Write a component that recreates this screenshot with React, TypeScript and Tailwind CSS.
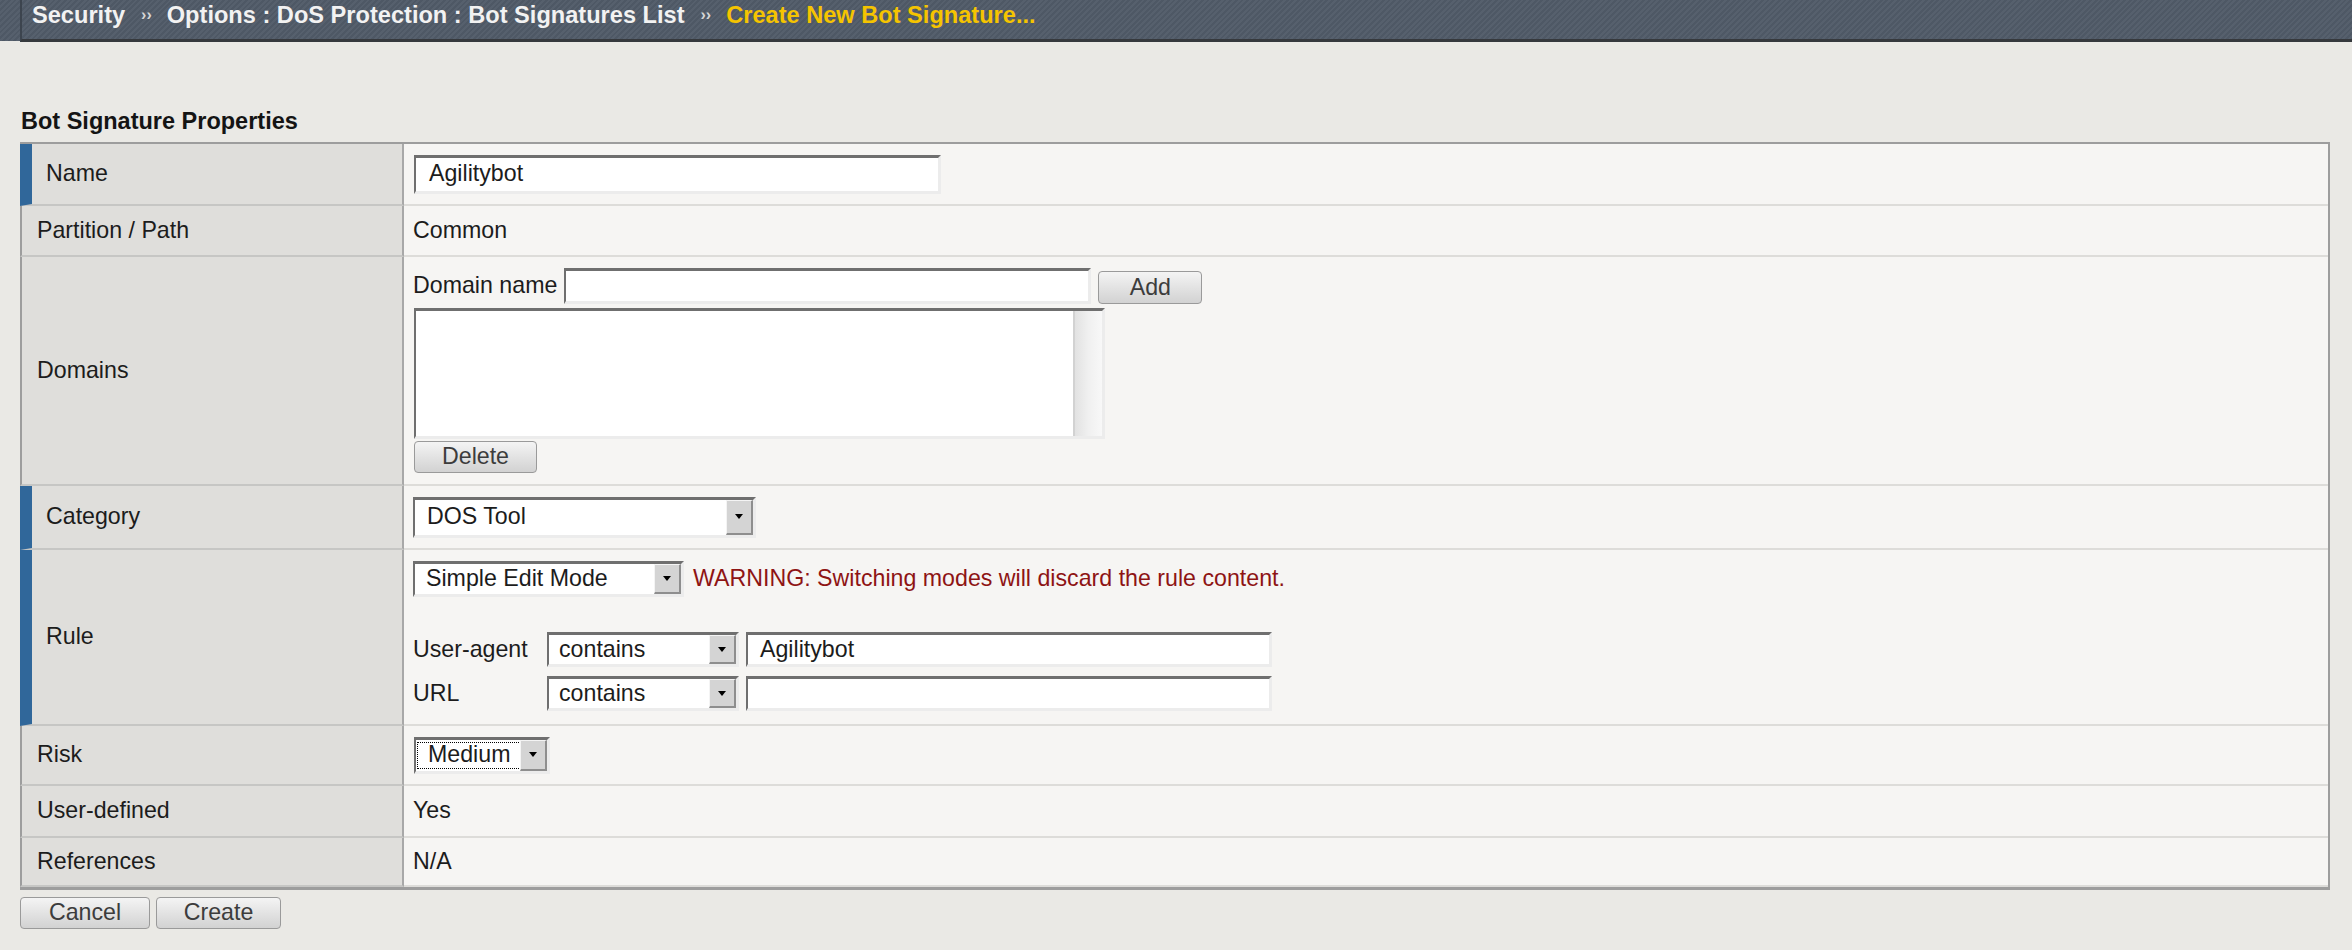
import React from 'react';

const stripe =
    'bg-[repeating-linear-gradient(135deg,#56606d_0px,#56606d_2px,#4e5865_2px,#4e5865_4px)]';

const Sep: React.FC = () => (
    <span className="ml-[16px] mr-[15px] text-[16px] text-[#d6d6d6]">››</span>
);

const TextInput: React.FC<{ value?: string; className: string }> = ({ value, className }) => (
    <div
        className={`flex items-center bg-white border-t-[3px] border-l-2 border-b-[3px] border-r-[3px] border-t-[#6f6f6f] border-l-[#6f6f6f] border-b-[#ececec] border-r-[#ececec] ${className}`}
    >
        {value}
    </div>
);

const Arrow: React.FC = () => (
    <div className="w-[27px] self-stretch shrink-0 flex items-center justify-center bg-[#d4d4d4] border-t border-l border-t-[#f4f4f4] border-l-[#f4f4f4] border-b-2 border-r-2 border-b-[#8e8e8e] border-r-[#8e8e8e]">
        <div className="w-0 h-0 border-l-[4px] border-r-[4px] border-t-[5px] border-l-transparent border-r-transparent border-t-black" />
    </div>
);

const Select: React.FC<{ value: string; className: string; focused?: boolean }> = ({
    value,
    className,
    focused,
}) => (
    <div
        className={`flex items-stretch bg-white border-t-[3px] border-l-2 border-b-[3px] border-r-[3px] border-t-[#6f6f6f] border-l-[#6f6f6f] border-b-[#ececec] border-r-[#ececec] ${className}`}
    >
        <div className="flex-1 flex items-center min-w-0">
            {focused ? (
                <span className="ml-[1px] my-[2px] self-stretch flex items-center px-[10px] border border-dotted border-black">
                    {value}
                </span>
            ) : (
                <span className="pl-[10px]">{value}</span>
            )}
        </div>
        <Arrow />
    </div>
);

const Button: React.FC<{ label: string; className: string }> = ({ label, className }) => (
    <div
        className={`flex items-center justify-center rounded-[4px] border border-[#9a9a9a] bg-gradient-to-b from-[#f4f4f4] to-[#d2d2d2] text-[#3c3c3c] ${className}`}
    >
        {label}
    </div>
);

const Row: React.FC<{
    label: string;
    marked?: boolean;
    height: string;
    children: React.ReactNode;
    valueClass?: string;
}> = ({ label, marked, height, children, valueClass }) => (
    <div className={`flex ${height}`}>
        <div
            className={`w-[384px] shrink-0 flex items-center bg-[#dfdedb] border-r-2 border-r-[#a8a8a8] border-b-2 border-b-[#c6c6c4] ${
                marked
                    ? 'border-l-[12px] border-l-[#30679a] pl-[14px]'
                    : 'border-l-2 border-l-[#9d9d9d] pl-[15px]'
            }`}
        >
            {label}
        </div>
        <div
            className={`flex-1 bg-[#f6f5f3] border-b-2 border-b-[#dddcd9] pl-[9px] ${valueClass ?? 'flex items-center'}`}
        >
            {children}
        </div>
    </div>
);

const App: React.FC = () => {
    return (
        <div className="w-[2352px] h-[950px] bg-[#eae9e5] font-['Liberation_Sans',Arial,sans-serif] text-[23.2px] text-[#1c1c1c] leading-[1] overflow-hidden">
            {/* Breadcrumb bar */}
            <div className="flex h-[42px]">
                <div className={`w-[20px] h-[41px] bg-[#6c798a] ${stripe}`} />
                <div
                    className={`flex-1 flex items-start pt-[2px] pl-[10px] border-l-2 border-l-[#3c444e] border-b-[3px] border-b-[#36393d] ${stripe} font-bold text-[23.6px] leading-[26px] text-[#f2f2f2]`}
                >
                    <span>Security</span>
                    <Sep />
                    <span>Options : DoS Protection : Bot Signatures List</span>
                    <Sep />
                    <span className="text-[#f5c400]">Create New Bot Signature...</span>
                </div>
            </div>

            <div className="mt-[66px] ml-[21px] h-[26px] leading-[26px] font-bold text-[23.5px] text-[#141414]">
                Bot Signature Properties
            </div>

            {/* Properties table */}
            <div className="mt-[8px] ml-[20px] w-[2310px] border-t-2 border-r-2 border-b-[3px] border-[#9d9d9d]">
                <Row label="Name" marked height="h-[62px]">
                    <TextInput value="Agilitybot" className="w-[527px] h-[39px] pl-[13px] ml-[1px]" />
                </Row>

                <Row label="Partition / Path" height="h-[51px]">
                    Common
                </Row>

                <Row label="Domains" height="h-[229px]" valueClass="flex flex-col items-start pt-[11px]">
                    <div className="flex items-start">
                        <span className="self-center">Domain name</span>
                        <TextInput className="ml-[7px] w-[527px] h-[36px]" />
                        <Button label="Add" className="ml-[7px] mt-[3px] w-[104px] h-[33px]" />
                    </div>
                    <div className="mt-[4px] ml-[1px] flex w-[691px] h-[131px] bg-white border-t-[3px] border-l-2 border-b-[3px] border-r-[3px] border-t-[#6f6f6f] border-l-[#6f6f6f] border-b-[#ececec] border-r-[#ececec]">
                        <div className="flex-1" />
                        <div className="w-[29px] border-l-2 border-l-[#d2d2d2] bg-gradient-to-r from-[#e2e2e2] via-[#f0f0f0] to-[#f8f8f8]" />
                    </div>
                    <Button label="Delete" className="mt-[2px] ml-[1px] w-[123px] h-[32px]" />
                </Row>

                <Row label="Category" marked height="h-[64px]">
                    <Select value="DOS Tool" className="w-[343px] h-[41px] pl-[2px]" />
                </Row>

                <Row label="Rule" marked height="h-[176px]" valueClass="flex flex-col items-start pt-[11px]">
                    <div className="flex items-center">
                        <Select value="Simple Edit Mode" className="w-[271px] h-[36px] pl-[1px]" />
                        <span className="ml-[9px] text-[#8e1414]">
                            WARNING: Switching modes will discard the rule content.
                        </span>
                    </div>
                    <div className="mt-[35px] flex items-center">
                        <span className="w-[134px]">User-agent</span>
                        <Select value="contains" className="w-[192px] h-[35px]" />
                        <TextInput value="Agilitybot" className="ml-[7px] w-[526px] h-[35px] pl-[12px]" />
                    </div>
                    <div className="mt-[9px] flex items-center">
                        <span className="w-[134px]">URL</span>
                        <Select value="contains" className="w-[192px] h-[35px]" />
                        <TextInput className="ml-[7px] w-[526px] h-[35px]" />
                    </div>
                </Row>

                <Row label="Risk" height="h-[60px]">
                    <Select value="Medium" focused className="ml-[1px] w-[136px] h-[37px]" />
                </Row>

                <Row label="User-defined" height="h-[52px]">
                    Yes
                </Row>

                <Row label="References" height="h-[49px]">
                    N/A
                </Row>
            </div>

            <div className="mt-[7px] ml-[20px] flex gap-[6px]">
                <Button label="Cancel" className="w-[130px] h-[32px]" />
                <Button label="Create" className="w-[125px] h-[32px]" />
            </div>
        </div>
    );
};

export default App;
